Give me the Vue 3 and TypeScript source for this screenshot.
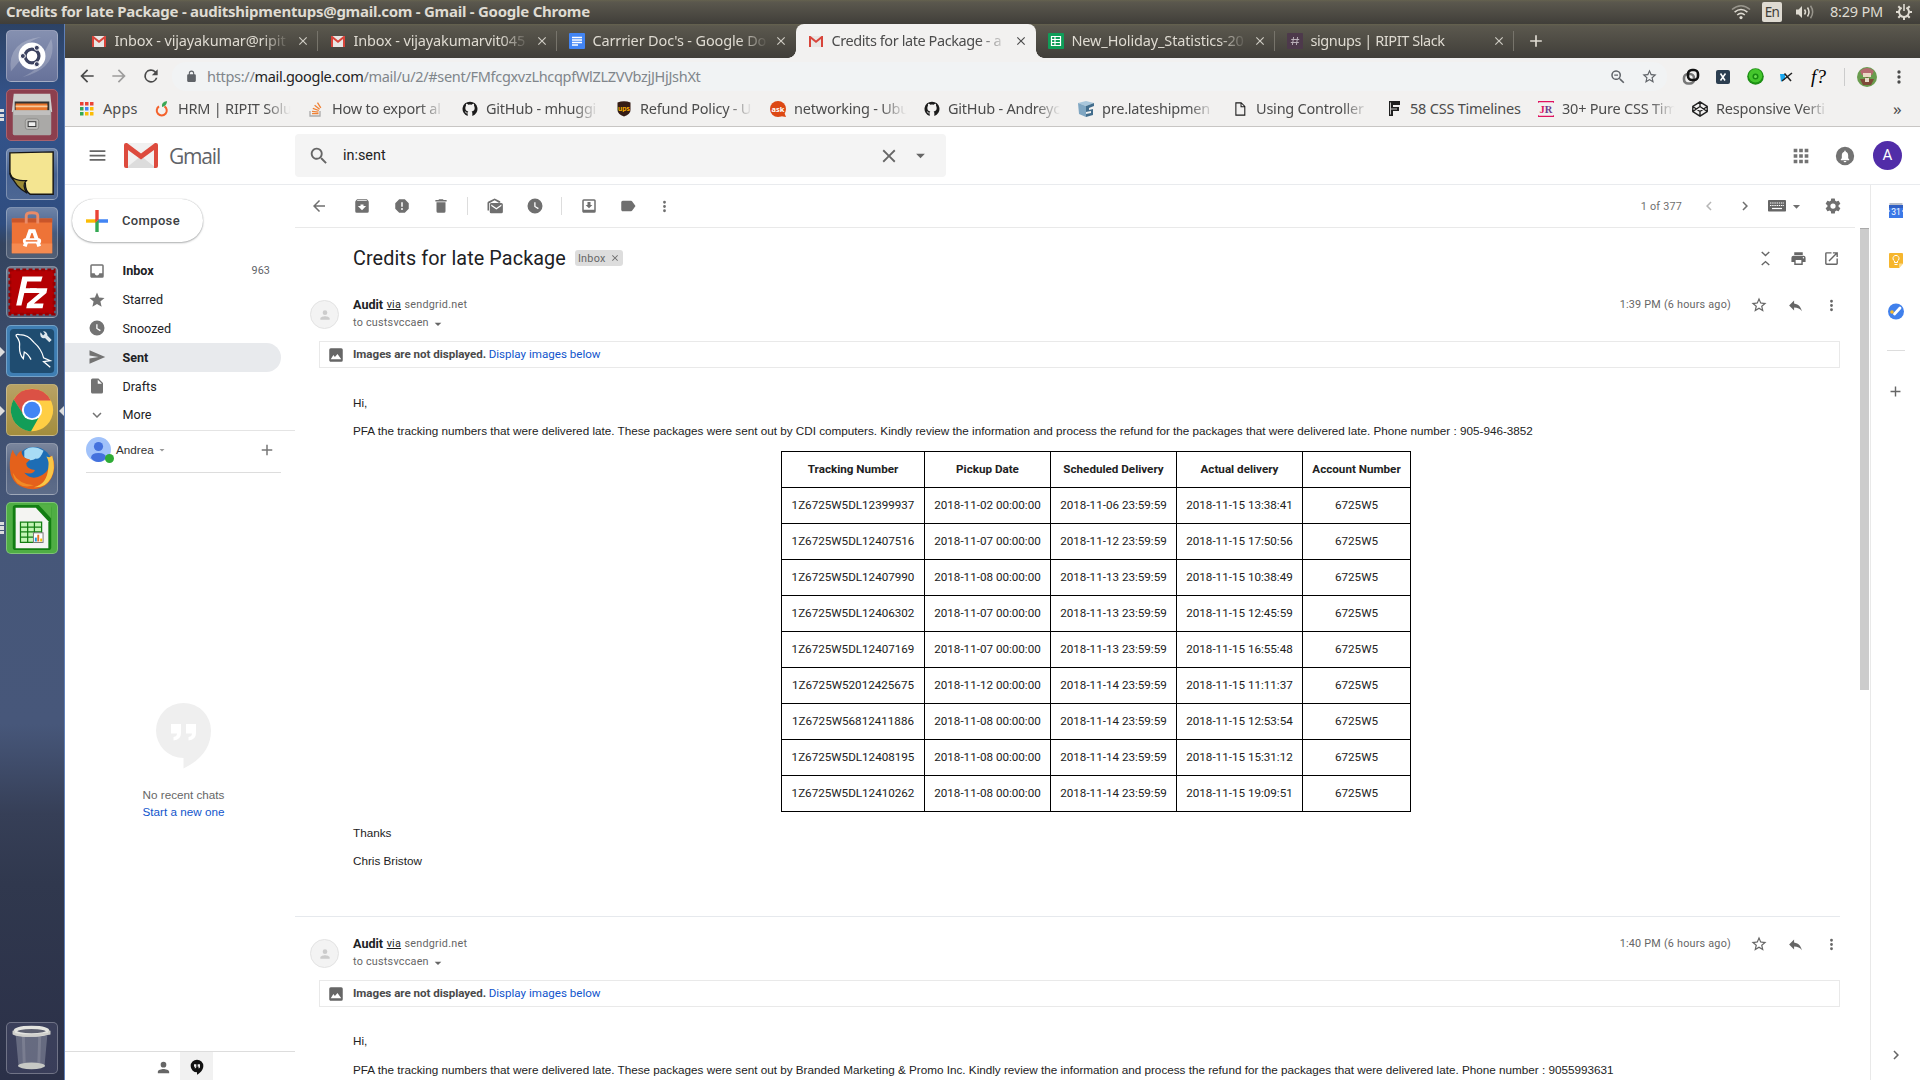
<script setup lang="ts">
import { h } from 'vue'

interface Tab { icon: string; title: string; active?: boolean; sep?: boolean; cls?: string }
interface Bookmark { icon: string; title: string; cls?: string }
interface Folder { icon: string; label: string; count?: string; bold?: boolean; active?: boolean }
interface Mail { time: string; intro: string; rows: string[][] }

const paths: Record<string, string> = {
  back: 'M20 11H7.8l5.6-5.6L12 4l-8 8 8 8 1.4-1.4L7.8 13H20z',
  forward: 'M12 4l-1.4 1.4 5.6 5.6H4v2h12.2l-5.6 5.6L12 20l8-8z',
  reload: 'M17.65 6.35A8 8 0 1 0 19.73 14h-2.08A6 6 0 1 1 12 6c1.66 0 3.14.69 4.22 1.78L13 11h7V4z',
  lock: 'M18 8h-1V6A5 5 0 0 0 7 6v2H6a2 2 0 0 0-2 2v10c0 1.1.9 2 2 2h12a2 2 0 0 0 2-2V10a2 2 0 0 0-2-2zM9 6a3 3 0 0 1 6 0v2H9z',
  zoomOut: 'M15.5 14h-.79l-.28-.27A6.5 6.5 0 1 0 13.73 14.43l.27.28v.79l5 4.99L20.49 19zM9.5 14a4.5 4.5 0 1 1 0-9 4.5 4.5 0 0 1 0 9zM7 8.8h5v1.4H7z',
  search: 'M15.5 14h-.79l-.28-.27A6.5 6.5 0 1 0 13.73 14.43l.27.28v.79l5 4.99L20.49 19zM9.5 14a4.5 4.5 0 1 1 0-9 4.5 4.5 0 0 1 0 9z',
  starO: 'M22 9.24l-7.19-.62L12 2 9.19 8.63 2 9.24l5.46 4.73L5.82 21 12 17.27 18.18 21l-1.63-7.03zM12 15.4l-3.76 2.27 1-4.28-3.32-2.88 4.38-.38L12 6.1l1.71 4.04 4.38.38-3.32 2.88 1 4.28z',
  star: 'M12 17.27L18.18 21l-1.64-7.03L22 9.24l-7.19-.61L12 2 9.19 8.63 2 9.24l5.46 4.73L5.82 21z',
  dots: 'M12 8a2 2 0 1 0 0-4 2 2 0 0 0 0 4zm0 2a2 2 0 1 0 0 4 2 2 0 0 0 0-4zm0 6a2 2 0 1 0 0 4 2 2 0 0 0 0-4z',
  menu: 'M3 18h18v-2H3zm0-5h18v-2H3zm0-7v2h18V6z',
  close: 'M19 6.41L17.59 5 12 10.59 6.41 5 5 6.41 10.59 12 5 17.59 6.41 19 12 13.41 17.59 19 19 17.59 13.41 12z',
  caret: 'M7 10l5 5 5-5z',
  grid: 'M4 8h4V4H4zm6 12h4v-4h-4zm-6 0h4v-4H4zm0-6h4v-4H4zm6 0h4v-4h-4zm6-10v4h4V4zm-6 4h4V4h-4zm6 6h4v-4h-4zm0 6h4v-4h-4z',
  bell: 'M12 1a11 11 0 1 0 0 22 11 11 0 0 0 0-22zm0 18.5a1.7 1.7 0 0 1-1.7-1.6h3.4a1.7 1.7 0 0 1-1.7 1.6zM17 17H7v-1.2l1.2-1.1V11c0-2.1 1.1-3.7 2.9-4.2v-.4a.9.9 0 0 1 1.8 0v.4c1.8.5 2.9 2.1 2.9 4.2v3.7l1.2 1.1z',
  archive: 'M20.54 5.23l-1.39-1.68C18.88 3.21 18.47 3 18 3H6c-.47 0-.88.21-1.16.55L3.46 5.23C3.17 5.57 3 6.02 3 6.5V19a2 2 0 0 0 2 2h14a2 2 0 0 0 2-2V6.5c0-.48-.17-.93-.46-1.27zM12 17.5L6.5 12H10v-2h4v2h3.5zM5.12 5l.81-1h12l.94 1z',
  spam: 'M15.73 3H8.27L3 8.27v7.46L8.27 21h7.46L21 15.73V8.27zM12 17.3a1.3 1.3 0 1 1 0-2.6 1.3 1.3 0 0 1 0 2.6zM13 13h-2V7h2z',
  trash: 'M6 19a2 2 0 0 0 2 2h8a2 2 0 0 0 2-2V7H6zM19.5 4H15.5l-1-1h-5l-1 1H4.5v2h15z',
  unread: 'M19 7.5V5.5L11.5 2 3.3 6C2.5 6.4 2 7 2 7.9V18h2V8.6L11.5 4.2 17 7.5zM20.5 8H7a2 2 0 0 0-2 2v9.5a2 2 0 0 0 2 2h13.5a2 2 0 0 0 2-2V10a2 2 0 0 0-2-2zm0 4l-6.7 4.5L7 12v-2l6.8 4.5 6.7-4.5z',
  clock: 'M12 2a10 10 0 1 0 0 20 10 10 0 0 0 0-20zm4 14.2L11 13V7h1.7v5.2l4.3 2.6z',
  move: 'M19 3H5a2 2 0 0 0-2 2v14c0 1.1.9 2 2 2h14a2 2 0 0 0 2-2V5a2 2 0 0 0-2-2zm0 14H5V5h14zM16.5 10.5H14V6.5h-4v4H7.5L12 15z',
  label: 'M17.63 5.84C17.27 5.33 16.67 5 16 5H5a2 2 0 0 0-2 2v10c0 1.1.9 2 2 2h11c.67 0 1.27-.33 1.63-.84L22 12z',
  left: 'M15.41 7.41L14 6l-6 6 6 6 1.41-1.41L10.83 12z',
  right: 'M10 6L8.59 7.41 13.17 12l-4.58 4.59L10 18l6-6z',
  down: 'M16.59 8.59L12 13.17 7.41 8.59 6 10l6 6 6-6z',
  gear: 'M19.43 12.98a7.8 7.8 0 0 0 0-1.96l2.11-1.65a.5.5 0 0 0 .12-.64l-2-3.46a.5.5 0 0 0-.61-.22l-2.49 1a7.3 7.3 0 0 0-1.69-.98l-.38-2.65A.49.49 0 0 0 14 2h-4a.49.49 0 0 0-.49.42l-.38 2.65c-.61.25-1.17.59-1.69.98l-2.49-1a.5.5 0 0 0-.61.22l-2 3.46a.5.5 0 0 0 .12.64l2.11 1.65a7.8 7.8 0 0 0 0 1.96l-2.11 1.65a.5.5 0 0 0-.12.64l2 3.46c.12.22.39.3.61.22l2.49-1c.52.4 1.08.73 1.69.98l.38 2.65c.03.24.24.42.49.42h4c.25 0 .46-.18.49-.42l.38-2.65c.61-.25 1.17-.59 1.69-.98l2.49 1c.23.09.49 0 .61-.22l2-3.46a.5.5 0 0 0-.12-.64zM12 15.5a3.5 3.5 0 1 1 0-7 3.5 3.5 0 0 1 0 7z',
  inbox: 'M19 3H5a2 2 0 0 0-2 2v14c0 1.1.9 2 2 2h14a2 2 0 0 0 2-2V5a2 2 0 0 0-2-2zm0 12h-4c0 1.66-1.35 3-3 3s-3-1.34-3-3H5V5h14z',
  send: 'M2 21L23 12 2 3v7l12 2-12 2z',
  draft: 'M6 2a2 2 0 0 0-2 2v16c0 1.1.9 2 2 2h12a2 2 0 0 0 2-2V8l-6-6zm7 7V3.5L18.5 9z',
  plus: 'M19 13h-6v6h-2v-6H5v-2h6V5h2v6h6z',
  person: 'M12 12a4 4 0 1 0 0-8 4 4 0 0 0 0 8zm0 2c-2.67 0-8 1.34-8 4v2h16v-2c0-2.66-5.33-4-8-4z',
  collapse: 'M7.4 2L6 3.4l6 5.6 6-5.6L16.6 2 12 6.3zM16.6 22l1.4-1.4-6-5.6-6 5.6L7.4 22l4.6-4.3z',
  print: 'M19 8H5a3 3 0 0 0-3 3v6h4v4h12v-4h4v-6a3 3 0 0 0-3-3zm-3 11H8v-5h8zm3-7a1 1 0 1 1 0-2 1 1 0 0 1 0 2zM18 3H6v4h12z',
  open: 'M19 19H5V5h7V3H5a2 2 0 0 0-2 2v14c0 1.1.9 2 2 2h14a2 2 0 0 0 2-2v-7h-2zM14 3v2h3.59l-9.83 9.83 1.41 1.41L19 6.41V10h2V3z',
  reply: 'M10 9V5l-7 7 7 7v-4.1c5 0 8.5 1.6 11 5.1-1-5-4-10-11-11z',
  image: 'M21 19V5a2 2 0 0 0-2-2H5a2 2 0 0 0-2 2v14c0 1.1.9 2 2 2h14a2 2 0 0 0 2-2zM5 17.5l3.5-5.5 2 2.5L14 10.5l5 7z',
  page: 'M5 2h9l6 6v14H5zM6.6 3.6v16.8h11.8V9.5H12.8V3.6zM14.3 4.3V8h3.7z',
  github: 'M12 1A11 11 0 0 0 8.5 22.5V18.5C5.5 19 5 17 5 17l-1-1.5c1.5 0 2 1.5 3 2h1.5C8.7 16.5 9 16 9.5 15.6 6 15.2 5 13.5 5 10.5c0-1.3.4-2.3 1-3.2-.2-.8-.2-2 .2-3 1.3 0 2.5.8 3.2 1.3a11 11 0 0 1 5.2 0c.7-.5 2-1.3 3.2-1.3.4 1 .4 2.2.2 3 .6.9 1 1.9 1 3.2 0 3-1 4.7-4.5 5.1.6.5 1 1.4 1 2.7v4.2A11 11 0 0 0 12 1z',
  hangouts: 'M12 1a9.5 9.5 0 0 0 0 19v3.5c5.5-2.7 9.5-8 9.5-13A9.5 9.5 0 0 0 12 1zm-1 10.5c0 1.4-1 2.5-2.5 2.5v-1.3c.7 0 1.2-.5 1.2-1.2H7.5V8H11zm5.5 0c0 1.4-1 2.5-2.5 2.5v-1.3c.7 0 1.2-.5 1.2-1.2H13V8h3.5z',
}

const Ic = (p: { n: string; s?: number }) =>
  h('svg', { viewBox: '0 0 24 24', width: p.s ?? 18, height: p.s ?? 18, class: 'ic' }, [
    h('path', { d: paths[p.n], fill: 'currentColor', 'fill-rule': 'evenodd' }),
  ])
Ic.props = ['n', 's']

const tabs: Tab[] = [
  { icon: 'gmail', title: 'Inbox - vijayakumar@ripit', sep: true, cls: 'wide' },
  { icon: 'gmail', title: 'Inbox - vijayakumarvit045', sep: true, cls: 'wide' },
  { icon: 'doc', title: "Carrrier Doc's - Google Do", cls: 'wide' },
  { icon: 'gmail', title: 'Credits for late Package - a', active: true },
  { icon: 'sheet', title: 'New_Holiday_Statistics-20', sep: true, cls: 'wide' },
  { icon: 'slack', title: 'signups | RIPIT Slack', sep: true },
]

const bookmarks: Bookmark[] = [
  { icon: 'hrm', title: 'HRM | RIPIT Solut' },
  { icon: 'so', title: 'How to export al' },
  { icon: 'github', title: 'GitHub - mhuggi' },
  { icon: 'ups', title: 'Refund Policy - U' },
  { icon: 'ask', title: 'networking - Ubu' },
  { icon: 'github', title: 'GitHub - Andreyc' },
  { icon: 'pre', title: 'pre.lateshipmen' },
  { icon: 'page', title: 'Using Controller' },
  { icon: 'css', title: '58 CSS Timelines', cls: 'short' },
  { icon: 'jr', title: '30+ Pure CSS Tim' },
  { icon: 'codepen', title: 'Responsive Verti' },
]

const folders: Folder[] = [
  { icon: 'inbox', label: 'Inbox', count: '963', bold: true },
  { icon: 'star', label: 'Starred' },
  { icon: 'clock', label: 'Snoozed' },
  { icon: 'send', label: 'Sent', bold: true, active: true },
  { icon: 'draft', label: 'Drafts' },
  { icon: 'down', label: 'More' },
]

const tools = ['back', 'archive', 'spam', 'trash', '', 'unread', 'clock', '', 'move', 'label', 'dots']

const columns = ['Tracking Number', 'Pickup Date', 'Scheduled Delivery', 'Actual delivery', 'Account Number']
const mails: Mail[] = [
  {
    time: '1:39 PM (6 hours ago)',
    intro: 'PFA the tracking numbers that were delivered late. These packages were sent out by CDI computers. Kindly review the information and process the refund for the packages that were delivered late. Phone number : 905-946-3852',
    rows: [
      ['1Z6725W5DL12399937', '2018-11-02 00:00:00', '2018-11-06 23:59:59', '2018-11-15 13:38:41', '6725W5'],
      ['1Z6725W5DL12407516', '2018-11-07 00:00:00', '2018-11-12 23:59:59', '2018-11-15 17:50:56', '6725W5'],
      ['1Z6725W5DL12407990', '2018-11-08 00:00:00', '2018-11-13 23:59:59', '2018-11-15 10:38:49', '6725W5'],
      ['1Z6725W5DL12406302', '2018-11-07 00:00:00', '2018-11-13 23:59:59', '2018-11-15 12:45:59', '6725W5'],
      ['1Z6725W5DL12407169', '2018-11-07 00:00:00', '2018-11-13 23:59:59', '2018-11-15 16:55:48', '6725W5'],
      ['1Z6725W52012425675', '2018-11-12 00:00:00', '2018-11-14 23:59:59', '2018-11-15 11:11:37', '6725W5'],
      ['1Z6725W56812411886', '2018-11-08 00:00:00', '2018-11-14 23:59:59', '2018-11-15 12:53:54', '6725W5'],
      ['1Z6725W5DL12408195', '2018-11-08 00:00:00', '2018-11-14 23:59:59', '2018-11-15 15:31:12', '6725W5'],
      ['1Z6725W5DL12410262', '2018-11-08 00:00:00', '2018-11-14 23:59:59', '2018-11-15 19:09:51', '6725W5'],
    ],
  },
  {
    time: '1:40 PM (6 hours ago)',
    intro: 'PFA the tracking numbers that were delivered late. These packages were sent out by Branded Marketing & Promo Inc. Kindly review the information and process the refund for the packages that were delivered late. Phone number : 9055993631',
    rows: [],
  },
]
</script>

<template>
  <div class="desktop">
    <header class="panel">
      <b class="panel-title">Credits for late Package - auditshipmentups@gmail.com - Gmail - Google Chrome</b>
      <div class="indicators">
        <svg class="wifi" width="20" height="16" viewBox="0 0 20 16" fill="none" stroke-width="1.6">
          <path d="M1 5.500Q10-2 19 5.500" stroke="#98958c" /><path d="M3.600 8.200Q10 2.800 16.400 8.200" stroke="#dfdbd2" /><path d="M6.200 11Q10 7.600 13.800 11" stroke="#dfdbd2" /><circle cx="10" cy="13.600" r="1.600" fill="#dfdbd2" />
        </svg>
        <span class="lang">En</span>
        <svg class="vol" width="20" height="16" viewBox="0 0 20 16" fill="none" stroke="#dfdbd2" stroke-width="1.500">
          <path d="M1 5.500h2.500L7 2v12L3.500 10.500H1z" fill="#dfdbd2" stroke="none" /><path d="M9.500 5.500Q11.500 8 9.500 10.500M12.500 3.500Q15.500 8 12.500 12.500" /><path d="M15.500 1.800Q19.800 8 15.500 14.200" stroke="#98958c" />
        </svg>
        <span class="clock">8:29 PM</span>
        <svg class="cog" width="16" height="16" viewBox="0 0 16 16" fill="none" stroke="#dfdbd2">
          <path d="M5.600 3.600A5 5 0 1 0 10.400 3.600" stroke-width="2" /><path d="M8 0v7" stroke-width="1.600" />
          <path d="M8 13v3M0 8h3M13 8h3M2.300 13.700l2-2M13.700 13.700l-2-2M2.300 2.300l2 2M13.700 2.300l-2 2" stroke-width="2" />
        </svg>
      </div>
    </header>

    <div class="workspace">
      <nav class="launcher">
        <div class="tile t-dash">
          <svg viewBox="0 0 52 52">
            <path d="M4 42Q0 10 36 6Q12 14 14 30" fill="#fff" opacity=".22" /><path d="M46 8Q54 38 16 48Q38 38 38 24" fill="#fff" opacity=".2" />
            <circle cx="26" cy="26" r="14" fill="#fff" /><circle cx="26" cy="26" r="7.200" fill="none" stroke="#3c4260" stroke-width="3.400" />
            <g fill="#3c4260" stroke="#fff" stroke-width="1"><circle cx="16.500" cy="26" r="2.600" /><circle cx="31" cy="17.500" r="2.600" /><circle cx="31" cy="34.500" r="2.600" /></g>
          </svg>
        </div>
        <div class="tile t-files"><i class="pips"></i>
          <svg viewBox="0 0 52 52">
            <path d="M7 4h38l2 19H5z" fill="#cfcfcd" /><path d="M8 12h36v11H8z" fill="#333" /><path d="M9 14h33v8H9z" fill="#e8742a" /><path d="M9 16h33v2H9z" fill="#f7c99c" />
            <rect x="6" y="21" width="40" height="26" rx="1.500" fill="#aaa9a7" /><path d="M7 21h38v5H7z" fill="#c9c9c7" opacity=".7" />
            <rect x="19" y="30" width="14" height="11" rx="2.500" fill="#bdbcba" stroke="#8b8a88" /><rect x="22" y="33" width="8" height="5" fill="#eee" stroke="#333" />
          </svg>
        </div>
        <div class="tile">
          <svg viewBox="0 0 52 52">
            <path d="M3 4l45-1v44H24Q19 44 19 36Q3 34 3 24z" fill="#f4e591" stroke="#161616" stroke-width="1.500" /><path d="M3 25Q5 33 20 33Q15 38 21 46Q9 40 3 25z" fill="#9b8b35" stroke="#161616" stroke-width="1.300" />
          </svg>
        </div>
        <div class="tile">
          <svg viewBox="0 0 52 52">
            <path d="M5 11h42v36H5z" fill="#ee7337" /><path d="M5 11h42v4H5z" fill="#c9552a" /><path d="M5 37h42v10H5z" fill="#f58a50" />
            <path d="M20 16V8q0-3 6-3t6 3v8" fill="none" stroke="#e98b68" stroke-width="3" />
            <path d="M18.500 40l5.500-16h4l5.500 16" fill="none" stroke="#fff" stroke-width="4" /><rect x="16.500" y="31.500" width="19" height="5.500" rx="2.700" fill="#fff" /><path d="M19.500 34.200h12" stroke="#ee7337" stroke-width="1.500" />
          </svg>
        </div>
        <div class="tile">
          <svg viewBox="0 0 52 52">
            <rect x="3" y="3" width="46" height="46" fill="#b40003" stroke="#980003" stroke-width="3" stroke-dasharray="4 2.500" />
            <path d="M16 10h21l-1.500 5H21l-1.500 7H31l-1.500 5H18l-3 13H9.500z" fill="#fff" /><path d="M24 22h18l-1 5-13 11h10l-1 5H20l1-5 13-11h-11z" fill="#fff" />
          </svg>
        </div>
        <div class="tile t-mysql"><i class="arrow"></i>
          <svg viewBox="0 0 52 52" fill="none">
            <rect x="3" y="3" width="46" height="46" rx="4" fill="#1f4c70" />
            <path d="M10 11Q8 8 13 9Q22 9 28 17Q36 24 38 33L45 36L38 37L45 43M10 11Q14 16 13 22Q13 30 17 34L18 27Q22 29 25 35" stroke="#fff" stroke-width="1.300" />
            <path d="M35 6.500a4 4 0 0 0 4.500 6l4.500 4.500 2.500-2.500-4.500-4.500a4 4 0 0 0-4.500-4.500l2 2.500-2 2z" fill="#dfe8ee" />
          </svg>
        </div>
        <div class="tile t-chrome"><i class="arrow"></i><i class="arrow r"></i>
          <svg viewBox="0 0 52 52">
            <circle cx="26" cy="26" r="22" fill="#ffce44" /><path d="M7 15A22 22 0 0 1 45.500 16H26L17 31z" fill="#db5145" /><path d="M7 15A22 22 0 0 0 25 48L34.700 31H17.300z" fill="#129d58" />
            <circle cx="26" cy="26" r="10.500" fill="#fff" /><circle cx="26" cy="26" r="8.500" fill="#4285f4" />
          </svg>
        </div>
        <div class="tile">
          <svg viewBox="0 0 52 52">
            <circle cx="28" cy="22" r="19" fill="#1d6db5" /><path d="M18 7Q26 0 38 7Q34 17 30 15Q24 19 18 14z" fill="#a8dcf5" />
            <path d="M6 6Q2 14 3 26Q5 46 27 47Q46 46 49 26Q50 16 45 12Q46 27 37 32Q26 39 18 30Q28 32 29 27Q20 26 20 20L24 16Q15 15 15 7Q11 9 10 13Q7 10 6 6z" fill="#e4611b" /><path d="M28 45Q42 42 43 24Q44 18 41 13Q45 15 47 12Q51 26 46 35Q40 46 28 45z" fill="#f9c646" /><path d="M6 30Q12 42 28 43Q18 46 11 41Q7 37 6 30z" fill="#f28b25" />
          </svg>
        </div>
        <div class="tile t-calc"><i class="pips"></i>
          <svg viewBox="0 0 52 52">
            <rect x="6" y="2" width="40" height="47" rx="3" fill="#127d12" /><path d="M33 2h13v14z" fill="#54b145" /><path d="M9 5h21l13 14v28H9z" fill="#f4f4f2" />
            <path d="M14 20h22v21H14z" fill="#c3f5b5" /><path d="M14 20h22v21H14zM14 25h22M14 30h22M14 35.500h22M21.500 20v21M28.500 20v21" fill="none" stroke="#127d12" stroke-width="1.300" />
            <rect x="27.500" y="31" width="10" height="10" fill="#fff" stroke="#777" /><path d="M29 36h2v4h-2z" fill="#1c99e0" /><path d="M31.500 33h2v7h-2z" fill="#e57325" /><path d="M34.500 37h2v3h-2z" fill="#f2c200" />
          </svg>
        </div>
        <div class="tile t-trash">
          <svg viewBox="0 0 52 52">
            <path d="M9 12h33l-3 33q-13 5-27 0z" fill="#dfe3ea" opacity=".27" /><path d="M17 14l1 30M34 14l-1 30" stroke="#fff" opacity=".13" stroke-width="3" />
            <ellipse cx="25.500" cy="44.500" rx="14" ry="3.500" fill="#c7c9c5" /><ellipse cx="25.500" cy="8.500" rx="17" ry="4" fill="#5d6070" stroke="#e4e4e0" stroke-width="3.500" /><path d="M7 8v3q9 4 37 0V8" fill="none" stroke="#cfcfcb" stroke-width="2.500" />
          </svg>
        </div>
      </nav>

      <main class="browser">
        <div class="tabstrip">
          <div v-for="(t, i) in tabs" :key="i" class="tab" :class="[t.cls, { active: t.active, sep: t.sep }]">
            <svg v-if="t.icon === 'gmail'" width="16" height="16" viewBox="0 0 16 16"><path d="M1 3h14v11H1z" fill="#e8e6e4" /><path d="M1 14V3h1.500L8 7.600 13.500 3H15v11h-2V6L8 10 3 6v8z" fill="#d8443a" /></svg>
            <svg v-else-if="t.icon === 'doc'" width="16" height="16" viewBox="0 0 16 16"><rect width="16" height="16" rx="1" fill="#4285f4" /><path d="M3 4.500h10M3 7h10M3 9.500h10M3 12h6" stroke="#fff" stroke-width="1.300" /></svg>
            <svg v-else-if="t.icon === 'sheet'" width="16" height="16" viewBox="0 0 16 16"><rect width="16" height="16" rx="1" fill="#0f9d58" /><path d="M3.500 3.500h9v9h-9zM3.500 6.500h9M3.500 9.500h9M7 3.500v9" fill="none" stroke="#fff" stroke-width="1.200" /></svg>
            <svg v-else width="16" height="16" viewBox="0 0 16 16"><rect width="16" height="16" rx="1" fill="#4d394b" /><path d="M6.600 4L5.400 12M10.600 4L9.400 12M4.200 6.500h8M3.800 9.500h8" stroke="#b9afb8" /></svg>
            <span class="tab-title">{{ t.title }}</span>
            <Ic n="close" :s="14" />
          </div>
          <Ic class="newtab" n="plus" :s="20" />
        </div>

        <div class="navbar">
          <div class="navbtns"><Ic n="back" :s="20" /><Ic class="dim" n="forward" :s="20" /><Ic n="reload" :s="20" /></div>
          <div class="omnibox">
            <Ic n="lock" :s="13" />
            <span class="url">https://<b>mail.google.com</b>/mail/u/2/#sent/FMfcgxvzLhcqpfWlZLZVVbzjJHjJshXt</span>
            <Ic n="zoomOut" :s="18" /><Ic n="starO" :s="17" />
          </div>
          <div class="exts">
            <svg width="18" height="18" viewBox="0 0 18 18" fill="none" stroke-width="2.600"><rect x="2" y="6" width="10" height="9.500" rx="4" stroke="#777" /><rect x="6" y="2" width="10" height="10" rx="4" stroke="#111" /></svg>
            <svg width="14" height="14" viewBox="0 0 14 14"><rect width="14" height="14" rx="2" fill="#2c3e50" /><path d="M4.500 3.500l4.500 7M9.500 3.500l-5 7" stroke="#fff" stroke-width="1.500" /></svg>
            <svg width="17" height="17" viewBox="0 0 17 17"><circle cx="8.500" cy="8.500" r="8.300" fill="#1d8f14" /><circle cx="8.500" cy="7.800" r="6.800" fill="#44c62c" /><circle cx="8.500" cy="8.500" r="3" fill="#168a10" /><circle cx="8.500" cy="8.500" r="1.500" fill="#6be04f" /></svg>
            <svg width="14" height="14" viewBox="0 0 14 14"><path d="M1 4h5v6H4l-2 2z" fill="#1aa7ee" /><path d="M3 11L13 3M5.500 3.500L12 11" stroke="#222" stroke-width="1.600" /></svg>
            <i class="fq">f?</i>
            <span class="bar"></span>
            <svg width="20" height="20" viewBox="0 0 20 20"><circle cx="10" cy="10" r="10" fill="#6a9c4e" /><path d="M3 4q7-6 14 0l-2 4H5z" fill="#b56a70" /><path d="M6 6h8v4H6z" fill="#ead9c5" /><path d="M3 12h4l3-2 3 2h4l-3 6H6z" fill="#7e4a38" /><path d="M8 11h4v4H8z" fill="#e6dcc8" /></svg>
            <Ic n="dots" :s="20" />
          </div>
        </div>

        <div class="bookmarks">
          <div class="bm apps">
            <svg width="14" height="14" viewBox="0 0 14 14"><path d="M0 0h3.500v3.500H0zM5 0h3.500v3.500H5zM10 0h3.500v3.500H10z" fill="#ea4335" /><path d="M0 5h3.500v3.500H0zM0 10h3.500v3.500H0z" fill="#34a853" /><path d="M5 5h3.500v3.500H5z" fill="#4285f4" /><path d="M10 5h3.500v3.500H10zM5 10h3.500v3.500H5zM10 10h3.500v3.500H10z" fill="#fbbc05" /></svg>
            <span>Apps</span>
          </div>
          <div v-for="(b, i) in bookmarks" :key="i" class="bm" :class="b.cls">
            <svg v-if="b.icon === 'hrm'" width="16" height="16" viewBox="0 0 16 16"><path d="M5 5.300a5 5 0 1 0 5.500 0" fill="none" stroke="#f4622c" stroke-width="2" /><path d="M8 6q-1-5 5-6 0 5-5 6z" fill="#3aa655" /></svg>
            <svg v-else-if="b.icon === 'so'" width="16" height="16" viewBox="0 0 16 16" fill="none" stroke-width="1.300"><path d="M2 10v5h10v-5" stroke="#aaa" /><path d="M4 12.700h6.500M4 10.300l6.500.9M4.800 7.300l6 2.200M6.600 4.300l5 4M9.500 1.700l3.300 5.200" stroke="#ef8236" /></svg>
            <svg v-else-if="b.icon === 'ups'" width="16" height="16" viewBox="0 0 16 16"><path d="M1.500 1.500q6.500-2.500 13 0V9q0 4-6.500 6.500Q1.500 13 1.500 9z" fill="#351c15" /><text x="8" y="10" text-anchor="middle" font-family="Lato" font-size="7.500" font-weight="700" fill="#ffb500">ups</text></svg>
            <svg v-else-if="b.icon === 'ask'" width="16" height="16" viewBox="0 0 16 16"><circle cx="8" cy="8" r="8" fill="#dd4814" /><path d="M10 15l6 1-2-5z" fill="#dd4814" /><text x="8" y="10.600" text-anchor="middle" font-family="Noto Sans" font-size="7.500" font-weight="700" fill="#fff">ask</text></svg>
            <svg v-else-if="b.icon === 'pre'" width="16" height="16" viewBox="0 0 16 16"><path d="M0 2l8-2 8 2-8 3z" fill="#a9c7dc" /><path d="M0 2l8 3v11l-7-3z" fill="#7fa6c2" /><path d="M8 5l8-3v3l-5 2v2l4-1v6l-7 2v-3l5-1v-2l-5 1z" fill="#426d8c" /></svg>
            <svg v-else-if="b.icon === 'css'" width="16" height="16" viewBox="0 0 16 16"><path d="M3 0h11v4H7v2h6v4H7v5H3z" fill="#202020" /><path d="M4.500 1.500v12M5 8h6" stroke="#f2f1f0" stroke-width=".8" /></svg>
            <svg v-else-if="b.icon === 'jr'" width="16" height="16" viewBox="0 0 16 16"><path d="M0 2V.6h16V2M0 14v1.400h16V14" fill="none" stroke="#e0115f" stroke-width="1.200" /><text x="8" y="11.800" text-anchor="middle" font-family="Liberation Serif" font-size="10.500" font-weight="700"><tspan fill="#e0115f">J</tspan><tspan fill="#6d3f8c">R</tspan></text></svg>
            <svg v-else-if="b.icon === 'codepen'" width="16" height="16" viewBox="0 0 16 16" fill="none" stroke="#222" stroke-width="1.400"><path d="M8 .8l7.200 4.700v5L8 15.200.8 10.500v-5zM8 .8v4.700M8 10.500v4.700M.8 5.500L8 10.500l7.200-5M.8 10.500L8 5.500l7.200 5" /></svg>
            <Ic v-else :n="b.icon" :s="16" />
            <span>{{ b.title }}</span>
          </div>
          <span class="overflow">»</span>
        </div>

        <div class="gm-head">
          <div class="brand">
            <Ic n="menu" :s="21" />
            <svg width="34" height="25" viewBox="0 0 34 25"><path d="M2 0h30v25H2z" fill="#f1f1f1" /><path d="M2 25l15-12 15 12z" fill="#dcdcdc" /><path d="M0 23V2q0-2 2-2h1l14 10.500L31 0h1q2 0 2 2v21q0 2-2 2h-2V7L17 16.500 4 7v18H2q-2 0-2-2z" fill="#dd4b3e" /></svg>
            <span>Gmail</span>
          </div>
          <div class="search"><Ic n="search" :s="22" /><span>in:sent</span><Ic n="close" :s="22" /><Ic n="caret" :s="21" /></div>
          <div class="account"><Ic n="grid" :s="22" /><Ic n="bell" :s="20" /><span>A</span></div>
        </div>

        <div class="gm-body">
          <aside class="side">
            <button class="compose">
              <svg width="22" height="22" viewBox="0 0 22 22"><path d="M9.300 0h3.400v9.300L9.300 12.700z" fill="#ea4335" /><path d="M12.700 9.300H22v3.400H11z" fill="#4285f4" /><path d="M0 9.300h11v3.400H0z" fill="#fbbc05" /><path d="M9.300 12.700l3.400-3.400V22H9.300z" fill="#34a853" /><path d="M9.300 9h3.400L9.300 12.700z" fill="#ea4335" /></svg>
              <span>Compose</span>
            </button>
            <ul class="folders">
              <li v-for="f in folders" :key="f.label" :class="{ bold: f.bold, active: f.active }">
                <Ic :n="f.icon" :s="18" /><span>{{ f.label }}</span><em>{{ f.count }}</em>
              </li>
            </ul>
            <div class="chatuser">
              <svg width="29" height="26" viewBox="0 0 29 26"><circle cx="12.500" cy="12.500" r="12.500" fill="#a1c2fa" /><circle cx="12.500" cy="9.500" r="4.600" fill="#4471dd" /><path d="M5 21q0-5 7.500-5t7.500 5q-3 4-7.500 4T5 21z" fill="#4471dd" /><circle cx="23.500" cy="21.500" r="4.500" fill="#2fab36" /></svg>
              <span>Andrea</span><Ic n="caret" :s="12" /><Ic n="plus" :s="18" />
            </div>
            <div class="nochats">
              <svg width="55" height="66" viewBox="0 0 55 66"><path d="M27.500 0a27.500 27.500 0 0 0 0 55v10.500Q55 52 55 27.500A27.500 27.500 0 0 0 27.500 0z" fill="#efefef" /><path d="M15 21h10v9q0 7-7.500 7.500v-3.500q3.500-.5 3.500-3.500H15zM30 21h10v9q0 7-7.500 7.500v-3.500q3.500-.5 3.500-3.500H30z" fill="#fff" /></svg>
              <p>No recent chats</p><a>Start a new one</a>
            </div>
            <div class="sidetabs"><span><Ic n="person" :s="17" /></span><span class="on"><Ic n="hangouts" :s="16" /></span></div>
          </aside>

          <section class="reader">
            <div class="tools">
              <template v-for="(t, i) in tools" :key="i"><Ic v-if="t" :n="t" :s="t === 'dots' ? 17 : 18" /><i v-else></i></template>
              <span class="count">1 of 377</span>
              <Ic class="dim" n="left" :s="18" /><Ic n="right" :s="18" />
              <svg width="18" height="12" viewBox="0 0 18 12"><rect y="0" width="18" height="11.500" rx=".8" fill="#666" /><path d="M2 3h14M2 5.500h14" stroke="#fff" stroke-width="1.200" stroke-dasharray="1.400 .8" /><path d="M4 8.500h10" stroke="#fff" stroke-width="1.200" /></svg>
              <Ic class="kbcaret" n="caret" :s="17" /><Ic n="gear" :s="18" />
            </div>
            <div class="scroll">
              <div class="subject">
                <h2>Credits for late Package</h2><span class="chip">Inbox<Ic n="close" :s="10" /></span>
                <div class="acts"><Ic n="collapse" :s="17" /><Ic n="print" :s="17" /><Ic n="open" :s="17" /></div>
              </div>
              <article v-for="m in mails" :key="m.time">
                <div class="mhead">
                  <span class="ava"><Ic n="person" :s="14" /></span>
                  <div class="from">
                    <p><b>Audit</b> <u>via</u> sendgrid.net</p>
                    <p>to custsvccaen <Ic n="caret" :s="16" /></p>
                  </div>
                  <span class="time">{{ m.time }}</span>
                  <div class="acts"><Ic n="starO" :s="18" /><Ic n="reply" :s="17" /><Ic n="dots" :s="17" /></div>
                </div>
                <div class="imgbar"><Ic n="image" :s="18" /><b>Images are not displayed.</b><a>Display images below</a></div>
                <div class="mbody">
                  <p>Hi,</p>
                  <p>{{ m.intro }}</p>
                  <template v-if="m.rows.length">
                    <table>
                      <tbody>
                        <tr><th v-for="c in columns" :key="c">{{ c }}</th></tr>
                        <tr v-for="r in m.rows" :key="r[0]"><td v-for="(c, j) in r" :key="j">{{ c }}</td></tr>
                      </tbody>
                    </table>
                    <p>Thanks</p>
                    <p>Chris Bristow</p>
                  </template>
                </div>
              </article>
            </div>
          </section>

          <div class="scrollbar"><i></i></div>

          <aside class="addons">
            <svg width="14" height="15" viewBox="0 0 14 15"><path d="M.500 0h13v4H.5z" fill="#b7bdc9" /><path d="M0 2h14v5l-1 1 1 1v6H0V9l1-1-1-1z" fill="#3b78e7" /><path d="M0 2h14v3H0z" fill="#2f5fc4" /><text x="7" y="11.500" text-anchor="middle" font-family="Roboto" font-size="8.500" fill="#fff">31</text></svg>
            <svg width="14" height="15" viewBox="0 0 14 15"><path d="M1 0h12q1 0 1 1v9.500L10 15H1q-1 0-1-1V1q0-1 1-1z" fill="#f6b62e" /><path d="M10 15v-4.500h4z" fill="#fbdc8c" /><path d="M5.500 9.500V8a3 3 0 1 1 3 0v1.500zM5.500 11.500h3" fill="none" stroke="#fff" stroke-width="1" /></svg>
            <svg width="16" height="17" viewBox="0 0 16 17"><circle cx="8" cy="8.500" r="8" fill="#4080ec" /><path d="M6.500 11l5.500-6" stroke="#fff" stroke-width="2.800" stroke-linecap="round" /><circle cx="4" cy="9" r="1.800" fill="#f9bb2d" /></svg>
            <i></i>
            <Ic n="plus" :s="17" />
            <Ic class="last" n="right" :s="18" />
          </aside>
        </div>
      </main>
    </div>
  </div>
</template>

<style>
body { margin: 0; overflow: hidden; }
</style>

<style scoped>
* { box-sizing: border-box; }
p, h2, ul { margin: 0; padding: 0; }
svg { display: block; flex: none; }
.desktop { width: 1920px; height: 1080px; display: flex; flex-direction: column; overflow: hidden; font-family: Roboto, sans-serif; }
.panel { height: 24px; flex: none; background: linear-gradient(#65624f 0, #5b584e 2px, #403e39); display: flex; align-items: center; justify-content: space-between; color: #dfdbd2; font-family: "Noto Sans", sans-serif; }
.panel-title { margin-left: 6px; padding-bottom: 2px; font-size: 15px; line-height: 22px; letter-spacing: -.25px; }
.indicators { display: flex; align-items: center; }
.wifi { margin-right: 11px; }
.lang { width: 20px; height: 20px; border-radius: 2px; background: #dfdbd2; color: #3f3d38; font-size: 13.500px; line-height: 20px; text-align: center; letter-spacing: -.7px; }
.vol { margin: 0 15px 0 13px; }
.clock { width: 55px; padding-bottom: 2px; font-size: 14.500px; letter-spacing: -.2px; white-space: nowrap; }
.cog { margin: 0 8px 0 11px; }
.workspace { flex: 1; display: flex; min-height: 0; }

.launcher { width: 65px; flex: none; padding: 6px 0 6px 6px; display: flex; flex-direction: column; gap: 7px; border-right: 1px solid #6080b8; background: linear-gradient(#2c4265 0, #34548c 80px, #2f4d80 200px, #34445f 220px, #394a68 300px, #465779 500px, #47577a 700px, #363f57 790px, #30384e 860px, #2b3048 1056px); }
.tile { position: relative; width: 52px; height: 52px; flex: none; border-radius: 5px; border: 1px solid rgba(255, 255, 255, .28); background: linear-gradient(rgba(255, 255, 255, .3), rgba(255, 255, 255, .1) 50%, rgba(255, 255, 255, .14)); }
.tile svg { width: 50px; height: 50px; }
.t-dash { background: linear-gradient(#8590b0, #67729a); }
.t-files { background: #8c3f4e; border-color: #a8626f; }
.t-mysql { background: #3f7eb3; }
.t-chrome { background: linear-gradient(#b8a265, #a38d3d); }
.t-calc { background: #4fae44; }
.t-trash { margin-top: auto; background: rgba(110, 110, 150, .22); }
.arrow { position: absolute; left: -7px; top: 21px; border: 5px solid transparent; border-left-color: #ddd; border-right: 0; }
.arrow.r { left: 52px; border-right: 5px solid #ddd; border-left: 0; }
.pips { position: absolute; left: -7px; top: 19px; width: 4px; height: 12px; background: repeating-linear-gradient(#ddd 0 3px, transparent 3px 4.500px); }

.browser { flex: 1; min-width: 0; display: flex; flex-direction: column; background: #fff; }
.tabstrip { height: 34px; flex: none; padding-left: 14px; display: flex; background: linear-gradient(#65624f 0, #5b584e 2px, #403e39); font: 14.500px "Noto Sans", sans-serif; }
.tab { position: relative; width: 239px; height: 34px; padding: 0 8.500px 0 12px; display: flex; align-items: center; color: #dfdbd2; }
.tab .ic { margin-left: auto; color: #cfccc4; }
.tab.sep::after { content: ''; position: absolute; right: 0; top: 7px; width: 1px; height: 20px; background: #77746b; }
.tab-title { width: 179px; margin-left: 7.500px; padding-bottom: 2px; white-space: nowrap; letter-spacing: -.42px; mask-image: linear-gradient(90deg, #000 82%, transparent 98%); }
.tab.wide .tab-title { letter-spacing: -.15px; }
.tab.active { width: 240px; background: #f2f1f0; border-radius: 8px 8px 0 0; color: #4c4c4c; }
.tab.active .ic { color: #4c4c4c; }
.tab.active::before, .tab.active::after { content: ''; position: absolute; bottom: 0; width: 8px; height: 8px; }
.tab.active::before { left: -8px; background: radial-gradient(circle at 0 0, transparent 7.500px, #f2f1f0 8px); }
.tab.active::after { right: -8px; background: radial-gradient(circle at 100% 0, transparent 7.500px, #f2f1f0 8px); }
.newtab { align-self: center; margin-left: 12px; color: #dfdbd2; }

.navbar { height: 37px; flex: none; background: #f2f1f0; display: flex; align-items: center; color: #4a4a4a; }
.navbtns { width: 107px; display: flex; gap: 12px; padding: 0 0 1px 12px; }
.dim { opacity: .5; }
.omnibox { width: 1495px; height: 29px; border-radius: 14px; background: #f1f3f4; display: flex; align-items: center; padding: 0 9.500px 0 13px; color: #5f6368; }
.url { flex: 1; margin-left: 9px; padding-bottom: 2px; color: #80868b; font: 14.500px "Noto Sans", sans-serif; letter-spacing: -.31px; }
.url b { font-weight: 400; color: #222; }
.omnibox .ic:last-child { margin-left: 14px; }
.exts { flex: 1; display: grid; grid-template-columns: 48px 16px 48px 14px 51px 1px 44px 19px; align-items: center; justify-items: center; }
.fq { font: italic 400 19px "Liberation Serif", serif; line-height: 20px; color: #000; }
.bar { width: 1px; height: 18px; background: #ccc; }

.bookmarks { height: 32px; flex: none; padding-bottom: 4px; background: #f2f1f0; border-bottom: 1px solid #c8c6c4; display: flex; align-items: center; font: 14.500px "Noto Sans", sans-serif; color: #4c4c4c; }
.bm { width: 154px; display: flex; align-items: center; gap: 8px; }
.bm span { width: 115px; margin-right: -4px; padding-bottom: 1px; white-space: nowrap; letter-spacing: -.22px; mask-image: linear-gradient(90deg, #000 76%, transparent 98%); }
.bm .ic { color: #1b1b1b; }
.bm.apps { width: 74px; margin-left: 15px; gap: 9px; }
.bm.apps span, .bm.short span { mask-image: none; }
.bm.apps span { letter-spacing: .1px; }
.bm.short { width: 152px; }
.overflow { margin-left: 47px; font-size: 17px; line-height: 20px; }

.gm-head { height: 58px; flex: none; border-bottom: 1px solid #e9ebee; display: flex; align-items: center; }
.brand { width: 230px; display: flex; align-items: center; padding-left: 22px; color: #666; }
.brand svg:nth-child(2) { margin: 0 11px 0 16px; }
.brand span { font: 21px "Open Sans", sans-serif; letter-spacing: -1.200px; color: #5f6368; }
.search { width: 651px; height: 43px; border-radius: 4px; background: #f4f4f4; display: flex; align-items: center; padding: 0 15px 0 13px; color: #666; }
.search span { flex: 1; margin-left: 13px; color: #222; font-size: 14.400px; }
.search .ic:last-child { margin-left: 10px; }
.account { margin-left: auto; display: flex; align-items: center; padding-right: 18px; color: #737373; }
.account .ic:nth-child(2) { margin: 0 18px 0 23px; }
.account span { width: 29px; height: 29px; border-radius: 50%; background: #512da8; color: #fff; text-align: center; font-size: 15px; line-height: 29px; }

.gm-body { flex: 1; min-height: 0; display: flex; color: #666; }
.side { width: 230px; flex: none; display: flex; flex-direction: column; }
.compose { width: 131px; height: 43px; margin: 14px 0 0 7px; flex: none; padding: 0 0 0 14px; display: flex; align-items: center; border: 0; border-radius: 22px; background: #fff; box-shadow: 0 1px 2px rgba(60, 64, 67, .4), 0 0 1px rgba(60, 64, 67, .4); }
.compose span { margin-left: 14px; font: 500 13px "Roboto", sans-serif; letter-spacing: .35px; color: #3c4043; }
.folders { list-style: none; padding-top: 14.500px; height: 189px; border-bottom: 1px solid #e4e4e4; }
.folders li { height: 28.800px; width: 216px; padding: 0 11px 0 23px; display: flex; align-items: center; border-radius: 0 15px 15px 0; font-size: 12.600px; color: #202124; }
.folders span { margin-left: 16.500px; }
.folders .ic { color: #737373; }
.folders .bold { font-weight: 700; }
.folders .active { background: #e8eaed; }
.folders em { margin-left: auto; font: 10.800px Roboto, sans-serif; letter-spacing: .1px; color: #5f6368; }
.chatuser { height: 42px; width: 195px; margin-left: 21px; border-bottom: 1px solid #ddd; display: flex; align-items: center; padding: 0 5px 4px 0; font: 11.700px "Liberation Sans", sans-serif; color: #333; }
.chatuser span { margin: 0 2px 0 1px; }
.chatuser .ic { color: #999; }
.chatuser .ic:last-child { margin-left: auto; color: #777; }
.nochats { flex: 1; padding-top: 230px; display: flex; flex-direction: column; align-items: center; padding-left: 7px; font: 11.700px/17px "Liberation Sans", sans-serif; color: #666; }
.nochats p { margin-top: 17px; }
.nochats a { color: #15c; }
.sidetabs { height: 29px; border-top: 1px solid #ddd; display: flex; padding-left: 82px; }
.sidetabs span { width: 33px; padding-top: 2px; display: flex; align-items: center; justify-content: center; }
.sidetabs .on { background: #f1f1f1; color: #111; }

.reader { width: 1560px; flex: none; display: flex; flex-direction: column; min-height: 0; }
.tools { height: 43px; flex: none; border-bottom: 1px solid #e9e9e9; display: grid; grid-template-columns: 48px 38px 42px 36px 16px 40px 40px 12px 44px 34px 38px 999px 53px 20px 44px 0 68px; align-items: center; justify-items: center; color: #6f6f6f; }
.tools i { width: 1px; height: 18px; background: #ddd; }
.kbcaret { margin-right: 6px; }
.count { justify-self: end; font-size: 10.800px; letter-spacing: .2px; }
.scroll { flex: 1; overflow: hidden; }
.subject { height: 60px; padding: 0 0 0 58px; display: flex; align-items: center; width: 1545px; }
.subject h2 { font: 19.800px "Roboto", sans-serif; letter-spacing: .1px; color: #202124; }
.chip { margin-left: 9px; height: 16px; border-radius: 3px; background: #ddd; padding: 0 3px; display: flex; align-items: center; gap: 4px; font-size: 10.800px; letter-spacing: .25px; color: #666; }
.acts { display: grid; grid-template-columns: 36px 36px 36px; justify-items: center; align-items: center; }
.subject .acts { margin-left: auto; grid-template-columns: 33px 33px 32px; margin-right: -7px; }
article { width: 1545px; }
article + article { padding-top: 10px; border-top: 1px solid #e6e9ed; }
.mhead { height: 53px; padding: 0 0 0 15px; display: flex; align-items: flex-start; }
.ava { width: 29px; height: 29px; margin-top: 12px; border-radius: 50%; background: #f3f3f3; border: 1px solid #e3e3e3; color: #ccc; display: flex; align-items: center; justify-content: center; }
.from { flex: 1; padding: 8px 0 0 14px; font-size: 10.800px; line-height: 18px; letter-spacing: .23px; }
.from p { display: flex; gap: 3.500px; }
.from b { font-size: 12.600px; color: #202124; letter-spacing: 0; }
.from u { color: #222; }
.from .ic { margin: 2px 0 0 -2px; }
.time { padding-top: 8px; font-size: 10.800px; line-height: 18px; letter-spacing: .22px; }
.mhead .acts { margin: 8px -9px 0 10px; }
.imgbar { margin-left: 24px; width: 1521px; height: 27px; border: 1px solid #e9e9e9; display: flex; align-items: center; padding-left: 7px; font-size: 11.600px; }
.imgbar b { margin: 0 2.500px 0 8px; padding-bottom: 2px; letter-spacing: -.03px; color: #4a4a4a; }
.imgbar a { padding-bottom: 2px; color: #15c; }
.mbody { padding: 26px 0 46px 58px; font: 11.710px/18px "Liberation Sans", sans-serif; color: #222; white-space: nowrap; }
.mbody p + p { margin-top: 10px; }
article + article .mbody { padding-top: 25px; }
article + article .mbody p + p { margin-top: 11px; }
table { border-collapse: collapse; table-layout: fixed; margin: 11px 0 12px 428px; font: 11.650px/14px Roboto, sans-serif; width: 630px; }
th, td { border: 1px solid #000; height: 36px; padding: 0 0 2px; text-align: center; }
th:nth-child(1) { width: 143px; }
th:nth-child(2), th:nth-child(3), th:nth-child(4) { width: 126px; }

.scrollbar { width: 15px; flex: none; padding: 43px 0 0 5px; }
.scrollbar i { display: block; width: 9px; height: 462px; background: #ccc; border-top: 1px solid #aaa; }
.addons { flex: 1; border-left: 1px solid #e9e9e9; display: flex; flex-direction: column; align-items: center; padding: 18px 0 16px; }
.addons svg:nth-child(2) { margin-top: 35px; }
.addons svg:nth-child(3) { margin-top: 35px; }
.addons i { width: 18px; height: 1px; background: #ddd; margin: 30px 0 32px; }
.addons .last { margin-top: auto; }
</style>
